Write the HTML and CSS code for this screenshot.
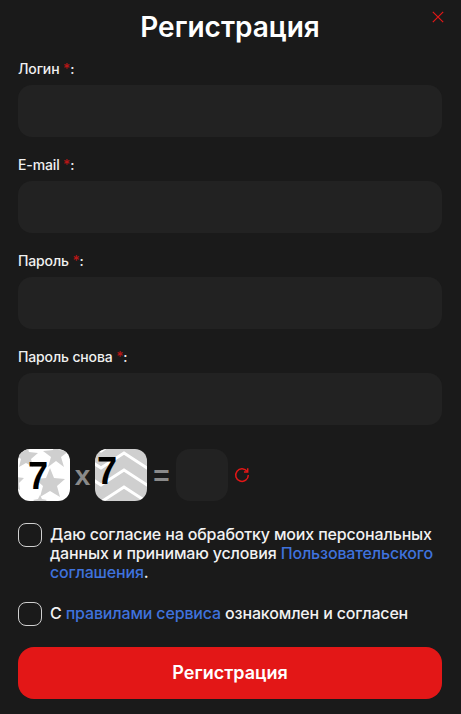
FILE: index.html
```html
<!DOCTYPE html>
<html lang="ru">
<head>
<meta charset="utf-8">
<title>Регистрация</title>
<link rel="stylesheet" href="styles.css">
</head>
<body>
<form class="modal">
  <button type="button" class="close" aria-label="Закрыть">
    <svg width="12" height="12" viewBox="0 0 12 12"><path d="M.8.8l10.4 10.4M11.200.8L.8 11.200" fill="none" stroke="#e31717" stroke-width="1.200"/></svg>
  </button>
  <h1 class="title">Регистрация</h1>
  <div class="field"><label class="label">Логин <span class="req">*</span>:</label><div class="input"></div></div>
  <div class="field"><label class="label">E-mail <span class="req">*</span>:</label><div class="input"></div></div>
  <div class="field"><label class="label">Пароль <span class="req">*</span>:</label><div class="input"></div></div>
  <div class="field"><label class="label">Пароль снова <span class="req">*</span>:</label><div class="input"></div></div>
  <div class="captcha">
    <div class="cap-img">
      <svg width="52" height="52" viewBox="0 0 52 52">
        <rect width="52" height="52" fill="#fff"/>
        <g fill="#cfcfcf">
          <polygon points="32,19 36,29 47,30 39,37 42,48 32,42 22,48 25,37 17,30 28,29"/>
          <polygon points="38,-8 41,1 51,2 43,8 46,18 38,12 30,18 33,8 25,2 35,1"/>
          <polygon points="8,-6 11,3 20,4 13,10 15,18 8,14 1,18 3,10 -4,4 5,3"/>
          <polygon points="-4,22 -1,28 6,29 1,34 2,41 -4,38 -10,41 -9,34 -14,29 -7,28"/>
          <polygon points="22,46 24,50 29,51 25,54 26,60 22,57 18,60 19,54 15,51 20,50"/>
        </g>
      </svg>
      <span class="digit d1">7</span>
    </div>
    <span class="op op-x">x</span>
    <div class="cap-img">
      <svg width="52" height="52" viewBox="0 0 52 52">
        <rect width="52" height="52" fill="#cfcfcf"/>
        <g fill="none" stroke="#fff" stroke-width="3">
          <path d="M-17 -13L6 2L29 -13L52 2L75 -13"/>
          <path d="M-17 4L6 19L29 4L52 19L75 4"/>
          <path d="M-17 21L6 36L29 21L52 36L75 21"/>
          <path d="M-17 38L6 53L29 38L52 53L75 38"/>
        </g>
      </svg>
      <span class="digit d2">7</span>
    </div>
    <span class="op op-eq">=</span>
    <div class="input cap-input"></div>
    <svg class="refresh" width="16" height="16" viewBox="0 0 16 16"><path d="M13.300 4.700A6.300 6.300 0 1 0 14.300 8" fill="none" stroke="#e31717" stroke-width="1.500"/><path d="M13.700 1.300v3.700H10" fill="none" stroke="#e31717" stroke-width="1.500"/></svg>
  </div>
  <div class="check first">
    <span class="box"></span>
    <p class="check-text">Даю согласие на обработку моих персональных данных и принимаю условия <a href="#">Пользовательского соглашения</a>.</p>
  </div>
  <div class="check second">
    <span class="box"></span>
    <p class="check-text">С <a href="#">правилами сервиса</a> ознакомлен и согласен</p>
  </div>
  <button type="button" class="submit">Регистрация</button>
</form>
</body>
</html>
```
FILE: styles.css
```css
* { box-sizing: border-box; }
html, body { margin: 0; padding: 0; height: 100%; }
body { background: #1a1a1a; color: #fff; font-family: Inter, "Noto Sans", sans-serif; overflow: hidden; }
.modal { position: relative; padding: 0 19px 0 18px; height: 714px; display: block; }
.close { position: absolute; top: 11px; right: 17px; padding: 0; border: 0; background: none; line-height: 0; }
.title { margin: 0; padding-top: 9px; height: 61px; font-size: 28px; line-height: 36px; font-weight: 600; text-align: center; }
.field { height: 96px; }
.label { display: block; height: 24px; font-size: 14px; line-height: 16px; font-weight: 500; letter-spacing: -0.01em; color: #f0f0f0; }
.req { color: #b81616; }
.input { height: 52px; border-radius: 14px; background: #222; }
.captcha { display: flex; align-items: center; height: 52px; margin-top: 4px; }
.cap-img { position: relative; width: 52px; height: 52px; border-radius: 12px; overflow: hidden; flex: none; }
.cap-img svg { display: block; }
.digit { position: absolute; font-family: "Liberation Sans", Arial, sans-serif; font-weight: 700; color: #000; font-size: 38px; line-height: 44px; transform: scaleX(0.95); transform-origin: left top; }
.d1 { left: 10px; top: 5px; }
.d2 { left: 2px; top: 0; }
.op { flex: none; font-weight: 700; color: #8a8a8a; text-align: center; font-family: "Liberation Sans", Arial, sans-serif; font-size: 28px; line-height: 30px; }
.op-x { width: 25px; margin-top: 2px; }
.op-eq { width: 29px; margin-top: 2px; }
.cap-input { width: 52px; flex: none; }
.refresh { margin-left: 6px; flex: none; margin-top: -1px; }
.check { display: flex; gap: 8px; }
.check.first { margin-top: 22px; }
.check.second { margin-top: 19px; align-items: center; }
.box { flex: none; width: 24px; height: 24px; border: 1px solid #cfcfcf; border-radius: 8px; }
.check-text { margin: 0; font-size: 16px; line-height: 19.2px; font-weight: 500; letter-spacing: -0.01em; color: #f2f2f2; }
.check.first .check-text { margin-top: 2px; }
.check-text a { color: #3f72dc; text-decoration: none; }
.submit { display: block; width: 100%; height: 52px; margin-top: 21px; border: 0; border-radius: 16px; background: #e31717; color: #fff; font-family: inherit; font-size: 18px; font-weight: 600; }
```
